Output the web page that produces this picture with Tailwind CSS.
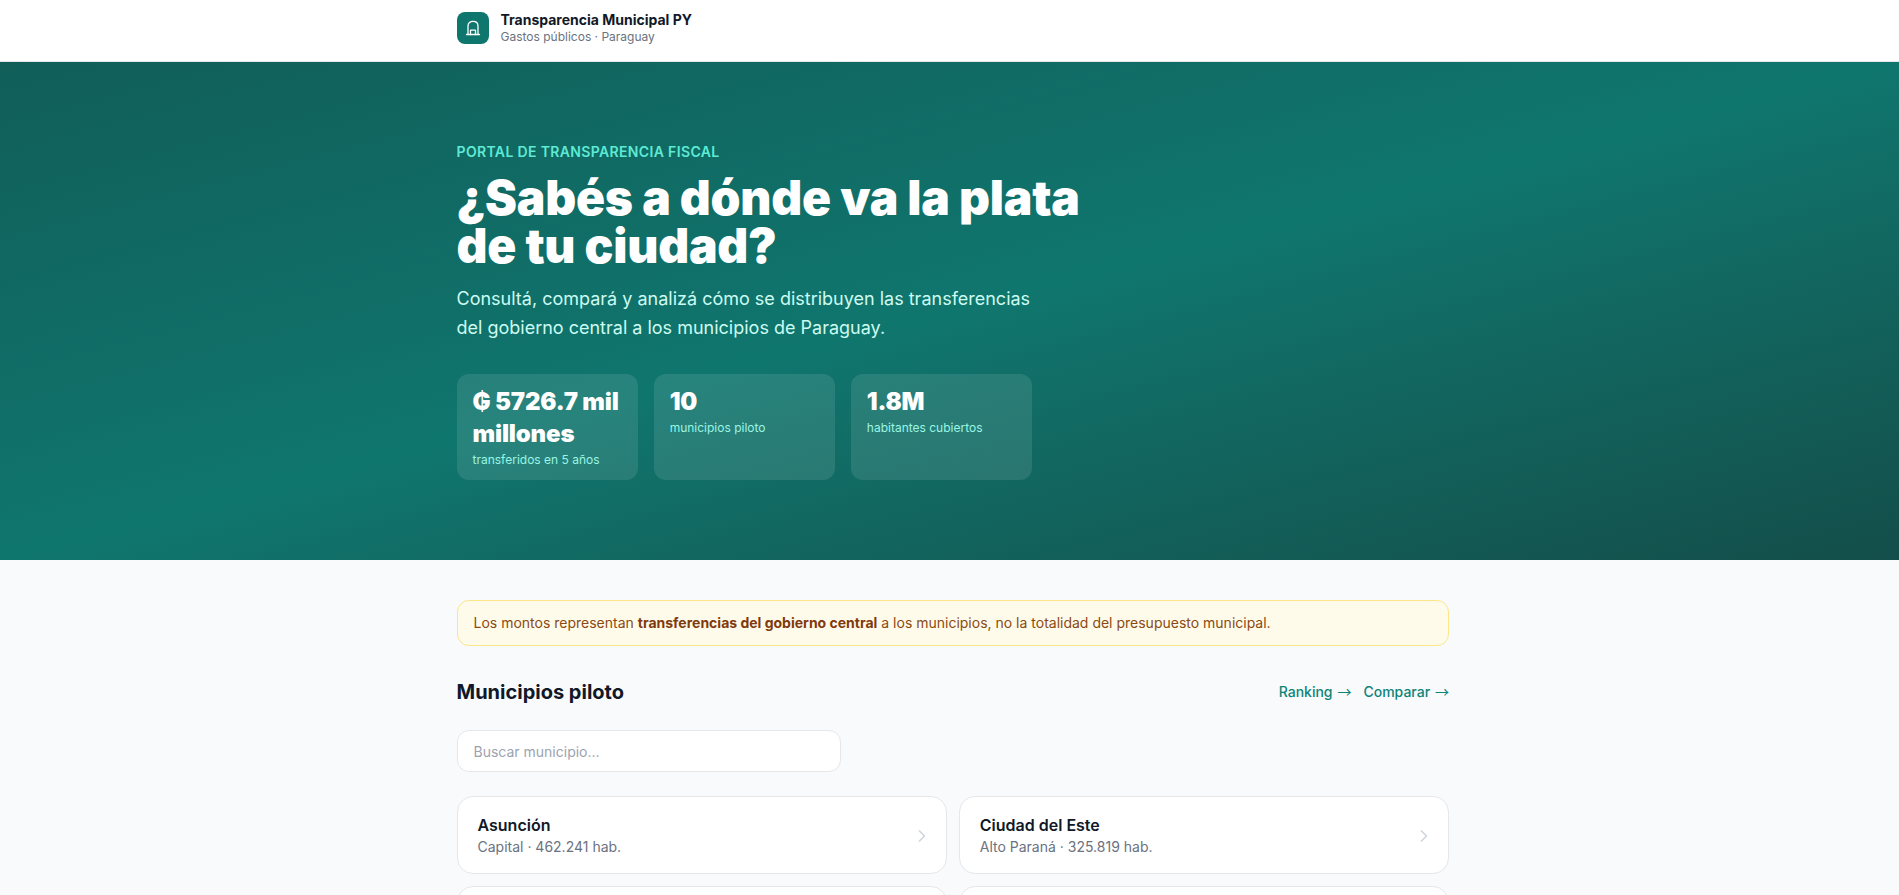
<!doctype html>
<html lang="es">
<head>
<meta charset="utf-8">
<title>Transparencia Municipal PY</title>
<script src="https://cdn.jsdelivr.net/npm/@tailwindcss/browser@4"></script>
</head>
<body class="bg-[#f8fafc] font-['Inter',sans-serif] text-[#111827] h-[895px] overflow-hidden">
<header class="bg-white border-b border-[#e5e7eb] h-[62px] pt-3">
  <div class="ml-[456.5px] w-[992.5px] flex items-start gap-3">
    <div class="w-8 h-8 rounded-lg bg-[#0f766e] flex items-center justify-center">
      <svg class="w-[18px] h-[18px]" viewBox="0 0 18 18" fill="none" stroke="white" stroke-width="1.3" stroke-linecap="round" stroke-linejoin="round"><path d="M2.5 15.5h13"/><path d="M4 15.5V7C4 4 6.2 2.3 9 2.3S14 4 14 7v8.5"/><path d="M6.5 15.5v-4.3h5v4.3"/></svg>
    </div>
    <div class="mt-[-1px]">
      <div class="text-sm font-bold leading-[17.5px] text-[#111827]">Transparencia Municipal PY</div>
      <div class="text-xs leading-4 text-[#6b7280]">Gastos públicos · Paraguay</div>
    </div>
  </div>
</header>
<section class="h-[498px] bg-gradient-to-br from-[#115e59] via-[#0f766e] to-[#134e4a] pt-20">
  <div class="ml-[456.5px] w-[992.5px]">
    <p class="text-sm font-semibold leading-5 tracking-wide text-[#5eead4] uppercase">Portal de transparencia fiscal</p>
    <h1 class="mt-3 text-5xl leading-[48px] font-black tracking-[-0.005em] text-white">¿Sabés a dónde va la plata<br>de tu ciudad?</h1>
    <p class="mt-[14px] text-lg leading-[29.25px] text-[#ccfbf1]">Consultá, compará y analizá cómo se distribuyen las transferencias<br>del gobierno central a los municipios de Paraguay.</p>
    <div class="mt-[31.5px] grid grid-cols-3 gap-4 w-[575.5px]">
      <div class="bg-white/10 rounded-xl px-4 py-3">
        <div class="text-2xl leading-8 font-black tracking-[-0.007em] text-white">₲ 5726.7 mil millones</div>
        <div class="mt-0.5 text-xs leading-4 text-[#99f6e4]">transferidos en 5 años</div>
      </div>
      <div class="bg-white/10 rounded-xl px-4 py-3">
        <div class="text-2xl leading-8 font-black tracking-[-0.007em] text-white">10</div>
        <div class="mt-0.5 text-xs leading-4 text-[#99f6e4]">municipios piloto</div>
      </div>
      <div class="bg-white/10 rounded-xl px-4 py-3">
        <div class="text-2xl leading-8 font-black tracking-[-0.007em] text-white">1.8M</div>
        <div class="mt-0.5 text-xs leading-4 text-[#99f6e4]">habitantes cubiertos</div>
      </div>
    </div>
  </div>
</section>
<main class="ml-[456.5px] w-[992.5px] pt-10">
  <div class="h-[46px] flex items-center px-4 rounded-xl border border-[#fde68a] bg-[#fffbeb] text-sm text-[#8a4a12]">
    <p>Los montos representan <strong class="font-bold text-[#7f3a0e]">transferencias del gobierno central</strong> a los municipios, no la totalidad del presupuesto municipal.</p>
  </div>
  <div class="mt-8 flex items-center justify-between">
    <h2 class="text-xl leading-7 font-bold text-[#111827]">Municipios piloto</h2>
    <div class="flex gap-3 text-sm font-medium text-[#0d8478]">
      <a href="#" class="leading-5">Ranking <span class="ml-[1.2px] leading-none font-['Noto_Sans_CJK_SC'] font-normal">→</span></a>
      <a href="#" class="leading-5">Comparar <span class="ml-[1.2px] leading-none font-['Noto_Sans_CJK_SC'] font-normal">→</span></a>
    </div>
  </div>
  <input class="mt-6 block w-96 h-[42px] px-4 rounded-xl border border-[#e5e7eb] bg-white text-sm placeholder:text-[#9ca3af]" placeholder="Buscar municipio...">
  <div class="mt-6 grid grid-cols-2 gap-3">
    <a href="#" class="h-[78px] flex items-center justify-between pl-5 pr-[14px] rounded-2xl border border-[#e5e7eb] bg-white">
      <div><div class="font-semibold leading-6 text-[#111827]">Asunción</div><div class="text-sm leading-5 text-[#6b7280]">Capital · 462.241 hab.</div></div>
      <svg class="w-5 h-5 mt-0.5 text-[#d1d5db]" viewBox="0 0 24 24" fill="none" stroke="currentColor" stroke-width="2" stroke-linecap="round" stroke-linejoin="round"><path d="m9 18 6-6-6-6"/></svg>
    </a>
    <a href="#" class="h-[78px] flex items-center justify-between pl-5 pr-[14px] rounded-2xl border border-[#e5e7eb] bg-white">
      <div><div class="font-semibold leading-6 text-[#111827]">Ciudad del Este</div><div class="text-sm leading-5 text-[#6b7280]">Alto Paraná · 325.819 hab.</div></div>
      <svg class="w-5 h-5 mt-0.5 text-[#d1d5db]" viewBox="0 0 24 24" fill="none" stroke="currentColor" stroke-width="2" stroke-linecap="round" stroke-linejoin="round"><path d="m9 18 6-6-6-6"/></svg>
    </a>
    <div class="h-[78px] rounded-2xl border border-[#e5e7eb] bg-white"></div>
    <div class="h-[78px] rounded-2xl border border-[#e5e7eb] bg-white"></div>
  </div>
</main>
</body>
</html>
